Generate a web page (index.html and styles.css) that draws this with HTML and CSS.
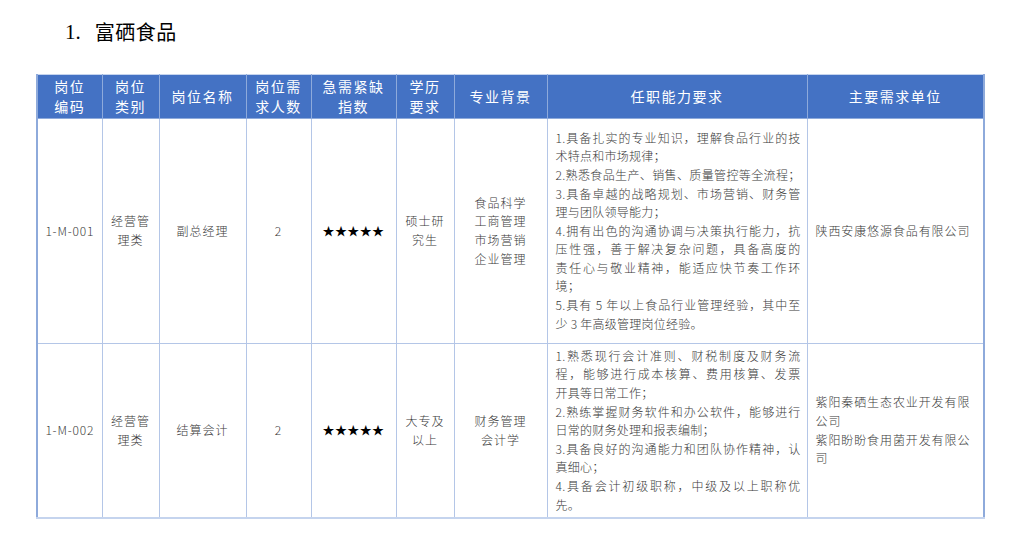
FILE: index.html
```html
<!DOCTYPE html>
<html lang="zh-CN">
<head>
<meta charset="utf-8">
<title>富硒食品</title>
<link rel="stylesheet" href="styles.css">
</head>
<body>
<h1 class="title"><span class="num">1.</span><span class="name">富硒食品</span></h1>
<table class="jobs">
  <colgroup>
    <col class="c1"><col class="c2"><col class="c3"><col class="c4"><col class="c5"><col class="c6"><col class="c7"><col class="c8"><col class="c9">
  </colgroup>
  <thead>
    <tr>
      <th>岗位<br>编码</th>
      <th>岗位<br>类别</th>
      <th>岗位名称</th>
      <th>岗位需<br>求人数</th>
      <th>急需紧缺<br>指数</th>
      <th>学历<br>要求</th>
      <th>专业背景</th>
      <th>任职能力要求</th>
      <th>主要需求单位</th>
    </tr>
  </thead>
  <tbody>
    <tr class="r1">
      <td class="code">1-M-001</td>
      <td>经营管理类</td>
      <td>副总经理</td>
      <td>2</td>
      <td class="stars">★★★★★</td>
      <td>硕士研究生</td>
      <td>食品科学<br>工商管理<br>市场营销<br>企业管理</td>
      <td class="req">
        <span class="l j">1.具备扎实的专业知识，理解食品行业的技</span>
        <span class="l">术特点和市场规律；</span>
        <span class="l j">2.熟悉食品生产、销售、质量管控等全流程；</span>
        <span class="l j">3.具备卓越的战略规划、市场营销、财务管</span>
        <span class="l">理与团队领导能力；</span>
        <span class="l j">4.拥有出色的沟通协调与决策执行能力，抗</span>
        <span class="l j">压性强，善于解决复杂问题，具备高度的</span>
        <span class="l j">责任心与敬业精神，能适应快节奏工作环</span>
        <span class="l">境；</span>
        <span class="l j">5.具有 5 年以上食品行业管理经验，其中至</span>
        <span class="l">少 3 年高级管理岗位经验。</span>
      </td>
      <td class="unit">陕西安康悠源食品有限公司</td>
    </tr>
    <tr class="r2">
      <td class="code">1-M-002</td>
      <td>经营管理类</td>
      <td>结算会计</td>
      <td>2</td>
      <td class="stars">★★★★★</td>
      <td>大专及以上</td>
      <td>财务管理<br>会计学</td>
      <td class="req">
        <span class="l j">1.熟悉现行会计准则、财税制度及财务流</span>
        <span class="l j">程，能够进行成本核算、费用核算、发票</span>
        <span class="l">开具等日常工作；</span>
        <span class="l j">2.熟练掌握财务软件和办公软件，能够进行</span>
        <span class="l">日常的财务处理和报表编制；</span>
        <span class="l j">3.具备良好的沟通能力和团队协作精神，认</span>
        <span class="l">真细心；</span>
        <span class="l j">4.具备会计初级职称，中级及以上职称优</span>
        <span class="l">先。</span>
      </td>
      <td class="unit">紫阳秦硒生态农业开发有限公司<br>紫阳盼盼食用菌开发有限公司</td>
    </tr>
  </tbody>
</table>
</body>
</html>
```
FILE: styles.css
```css
html, body {
  margin: 0;
  padding: 0;
  background: #ffffff;
}
body {
  padding: 18px 0 0 36px;
  font-family: "Noto Sans CJK SC", "Noto Sans", sans-serif;
  color: #333333;
}
.title {
  margin: 0 0 0 29px;
  height: 28px;
  line-height: 28px;
  font-size: 20px;
  font-weight: 400;
  color: #000000;
  display: flex;
  align-items: center;
}
.title .num {
  font-family: "Liberation Serif", serif;
  font-size: 21px;
  margin-right: 14px;
}
.title .name {
  font-family: "Noto Sans CJK SC", sans-serif;
  letter-spacing: 0.5px;
}
.jobs {
  margin-top: 28px;
  border-collapse: collapse;
  table-layout: fixed;
  width: 947px;
  border-left: 2px solid #8eaadb;
  border-right: 2px solid #8eaadb;
  border-bottom: 2px solid #c5d4ee;
}
.c1 { width: 65px; }
.c2 { width: 57px; }
.c3 { width: 87px; }
.c4 { width: 65px; }
.c5 { width: 85px; }
.c6 { width: 58px; }
.c7 { width: 93px; }
.c8 { width: 260px; }
.c9 { width: 177px; }
.jobs th {
  height: 43px;
  padding: 0 2px;
  background: #4472c4;
  color: #ffffff;
  font-size: 14px;
  font-weight: 400;
  line-height: 19.5px;
  letter-spacing: 1.5px;
  text-align: center;
  vertical-align: middle;
  border: 1px solid #8eaadb;
  border-top: 1px solid #c5d4ee;
}
.jobs td {
  padding: 0 5px;
  font-size: 12px;
  font-weight: 300;
  line-height: 18.6px;
  letter-spacing: 1px;
  color: #3a3a3a;
  text-align: center;
  vertical-align: middle;
  border: 1px solid #b4c6e7;
}
.r1 td { height: 224px; }
.r2 td { height: 173px; }
.jobs td.code {
  letter-spacing: 0.8px;
  padding: 0 2px;
}
.jobs td.stars {
  color: #000000;
  font-weight: 400;
  letter-spacing: 0.4px;
}
.jobs td.req {
  padding: 0 6px 0 8px;
  text-align: left;
  letter-spacing: 0.25px;
}
.req .l {
  display: block;
}
.req .j {
  text-align: justify;
  text-align-last: justify;
}
.jobs td.unit {
  padding: 0 6px 0 8px;
  text-align: left;
  letter-spacing: 0.9px;
}
```
